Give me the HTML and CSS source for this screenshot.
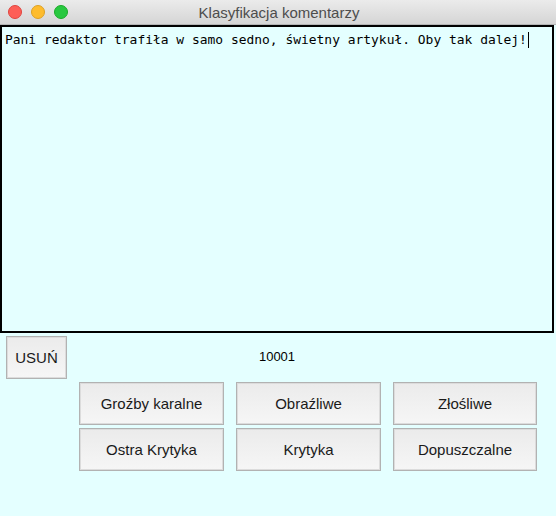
FILE: index.html
```html
<!DOCTYPE html>
<html lang="pl">
<head>
<meta charset="utf-8">
<title>Klasyfikacja komentarzy</title>
<link rel="stylesheet" href="styles.css">
</head>
<body>
<div class="window">
  <div class="titlebar">
    <div class="lights">
      <span class="light red"></span>
      <span class="light yellow"></span>
      <span class="light green"></span>
    </div>
    <div class="title">Klasyfikacja komentarzy</div>
  </div>
  <div class="editor"><span class="text">Pani redaktor trafiła w samo sedno, świetny artykuł. Oby tak dalej!</span><span class="caret"></span></div>
  <div class="toolbar">
    <div class="left"><button class="btn del">USUŃ</button></div>
    <div class="counter">10001</div>
    <div class="right"></div>
  </div>
  <div class="grid">
    <button class="btn">Groźby karalne</button>
    <button class="btn">Obraźliwe</button>
    <button class="btn">Złośliwe</button>
    <button class="btn">Ostra Krytyka</button>
    <button class="btn">Krytyka</button>
    <button class="btn">Dopuszczalne</button>
  </div>
</div>
</body>
</html>
```
FILE: styles.css
```css
* { box-sizing: border-box; }
html, body {
  margin: 0;
  padding: 0;
  background: #e4ffff;
  width: 556px;
  height: 516px;
  overflow: hidden;
  font-family: "Liberation Sans", Arial, sans-serif;
}
.window {
  display: flex;
  flex-direction: column;
  width: 556px;
}
.titlebar {
  position: relative;
  height: 25px;
  background: linear-gradient(#ebebeb, #d5d5d5);
  border-bottom: 1px solid #b4b4b4;
  display: flex;
  align-items: center;
  justify-content: center;
}
.lights {
  position: absolute;
  left: 8px;
  top: 5px;
  display: flex;
  gap: 9px;
}
.light {
  width: 14px;
  height: 14px;
  border-radius: 50%;
  display: block;
}
.red { background: #fd5f57; border: 1px solid #e0443e; }
.yellow { background: #febc2e; border: 1px solid #dea123; }
.green { background: #28c840; border: 1px solid #1aab29; }
.title {
  font-size: 15px;
  color: #4d4d4d;
  margin-left: 2px;
}
.editor {
  width: 554px;
  height: 308px;
  border: 2px solid #000;
  background: #e4ffff;
  padding: 5px 3px;
  font-family: "DejaVu Sans Mono", monospace;
  font-size: 12.95px;
  line-height: 16px;
  color: #000;
  white-space: pre;
}
.caret {
  display: inline-block;
  width: 1px;
  height: 16px;
  background: #000;
  vertical-align: top;
  margin-left: 1px;
}
.toolbar {
  display: grid;
  grid-template-columns: 1fr auto 1fr;
  align-items: center;
  padding: 3px 0 0 6px;
}
.counter {
  font-size: 13px;
  color: #000;
  margin-right: 8px;
  margin-top: -2px;
}
.btn {
  font-family: "Liberation Sans", Arial, sans-serif;
  font-size: 15px;
  color: #1a1a1a;
  background: linear-gradient(#ebebeb, #f6f6f6);
  border: 1px solid #b2b2b2;
  box-shadow: inset 0 0 0 1px #dcdcdc;
  border-radius: 0;
  height: 43px;
  padding: 0;
  margin: 0;
}
.del {
  width: 61px;
}
.grid {
  display: grid;
  grid-template-columns: 145px 145px 144px;
  grid-auto-rows: 43px;
  column-gap: 12px;
  row-gap: 3px;
  padding-left: 79px;
  margin-top: 3px;
}
```
